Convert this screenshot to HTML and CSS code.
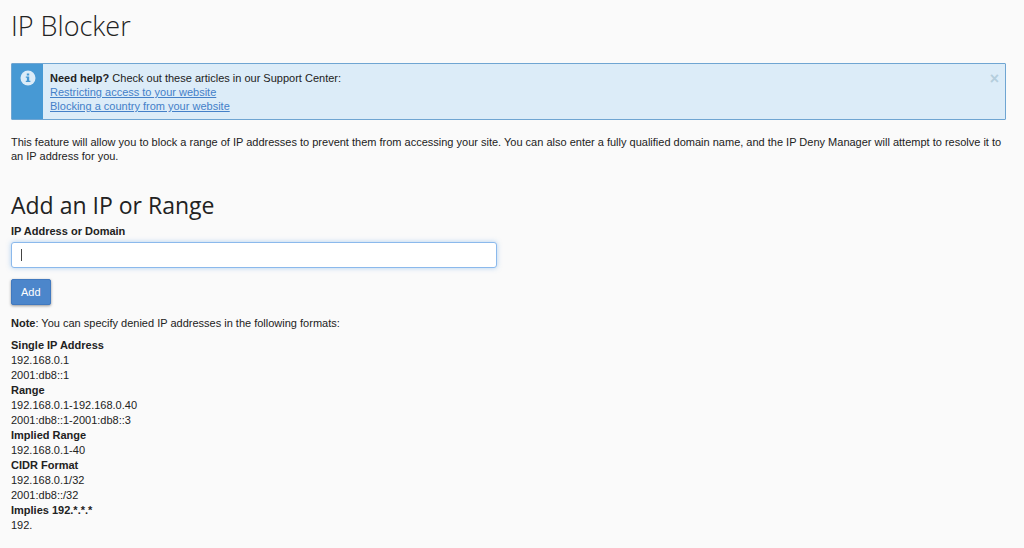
FILE: index.html
```html
<!DOCTYPE html>
<html lang="en">
<head>
    <meta charset="UTF-8">
    <meta name="viewport" content="width=device-width, initial-scale=1.0">
    <title>IP Blocker</title>
    <link rel="stylesheet" href="styles.css">
</head>
<body>
    <main class="page">
        <h1 class="page-title">IP Blocker</h1>

        <div class="help-box">
            <div class="help-icon">
                <svg width="16" height="16" viewBox="0 0 16 16" aria-hidden="true">
                    <circle cx="8" cy="8" r="7.5" fill="#dcecf8"/>
                    <path d="M6.800 3.500h2.400v2H6.800zM5.800 6.500h3.400v4.200h1.200V12H5.800v-1.300h1.100V7.800H5.800z" fill="#4799d4"/>
                </svg>
            </div>
            <div class="help-text">
                <strong>Need help?</strong> Check out these articles in our Support Center:<br>
                <a href="#">Restricting access to your website</a><br>
                <a href="#">Blocking a country from your website</a>
            </div>
            <button class="close-btn" type="button" aria-label="Close">&times;</button>
        </div>

        <p class="description">This feature will allow you to block a range of IP addresses to prevent them from accessing your site. You can also enter a fully qualified domain name, and the IP Deny Manager will attempt to resolve it to an IP address for you.</p>

        <h2 class="section-title">Add an IP or Range</h2>
        <form class="add-form">
            <label for="ip">IP Address or Domain</label>
            <div class="input-wrap">
                <input class="ip-input" type="text" id="ip" name="ip">
                <span class="caret"></span>
            </div>
            <button class="add-btn" type="submit">Add</button>
        </form>

        <p class="note"><strong>Note</strong>: You can specify denied IP addresses in the following formats:</p>

        <dl class="formats">
            <dt>Single IP Address</dt>
            <dd>192.168.0.1</dd>
            <dd>2001:db8::1</dd>
            <dt>Range</dt>
            <dd>192.168.0.1-192.168.0.40</dd>
            <dd>2001:db8::1-2001:db8::3</dd>
            <dt>Implied Range</dt>
            <dd>192.168.0.1-40</dd>
            <dt>CIDR Format</dt>
            <dd>192.168.0.1/32</dd>
            <dd>2001:db8::/32</dd>
            <dt>Implies 192.*.*.*</dt>
            <dd>192.</dd>
        </dl>
    </main>
</body>
</html>
```
FILE: styles.css
```css
* {
    box-sizing: border-box;
}

body {
    margin: 0;
    background: #fafafa;
    color: #222;
    font-family: "Liberation Sans", Arial, sans-serif;
    font-size: 11px;
    line-height: 14px;
}

.page {
    padding: 8px 18px 15px 11px;
}

.page-title,
.section-title {
    margin: 0;
    font-family: "Open Sans", sans-serif;
}

.page-title {
    font-size: 27px;
    font-weight: 300;
    line-height: 36px;
    margin-bottom: 19px;
}

.help-box {
    display: flex;
    background: #dcecf8;
    border: 1px solid #6fa5d2;
    border-radius: 1px;
    margin-bottom: 15px;
}

.help-icon {
    width: 31px;
    padding-top: 6px;
    background: #4799d4;
    text-align: center;
}

.help-text {
    flex: 1;
    padding: 7px 7px 6px;
}

.help-text a {
    color: #4480c8;
}

.close-btn {
    align-self: flex-start;
    margin: 8px 6px 0 0;
    padding: 0;
    border: none;
    background: none;
    color: #b5cedd;
    font-family: inherit;
    font-size: 16px;
    font-weight: bold;
    line-height: 14px;
    cursor: pointer;
}

.description {
    margin: 0 0 25px;
}

.section-title {
    font-size: 23px;
    font-weight: 400;
    line-height: 34px;
    margin-bottom: 2px;
}

.add-form label {
    display: block;
    margin-bottom: 4px;
    font-weight: bold;
}

.input-wrap {
    position: relative;
    max-width: 486px;
    margin-bottom: 11px;
}

.ip-input {
    display: block;
    width: 100%;
    height: 26px;
    padding: 0 9px;
    border: 1px solid #8bb9ec;
    border-radius: 3px;
    background: #fff;
    font: inherit;
    outline: none;
    box-shadow: 0 0 5px rgba(102, 165, 233, 0.5);
}

.caret {
    position: absolute;
    top: 7px;
    left: 10px;
    width: 1px;
    height: 12px;
    background: #444;
}

.add-btn {
    display: block;
    height: 26px;
    padding: 0 9px;
    border: 1px solid #4179bf;
    border-radius: 2px;
    background: #4c86cb;
    color: #fff;
    font: inherit;
    cursor: pointer;
    box-shadow: 0 1px 3px rgba(0, 0, 0, 0.4);
}

.note {
    margin: 11px 0 8px;
}

.formats {
    margin: 0;
    line-height: 15px;
}

.formats dt {
    font-weight: bold;
}

.formats dd {
    margin: 0;
}
```
